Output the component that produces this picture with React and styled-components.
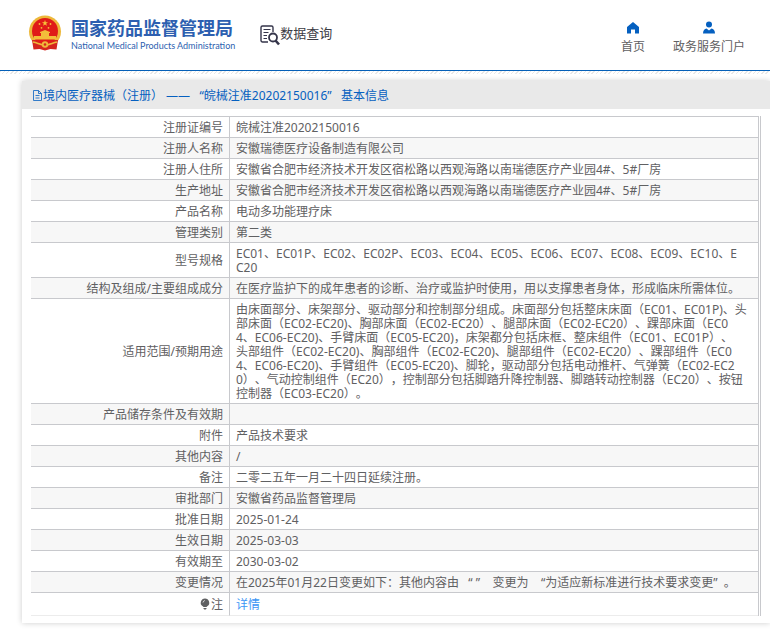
import React from "react";
import styled, { createGlobalStyle } from "styled-components";

const GlobalStyle = createGlobalStyle`
  * {
    box-sizing: border-box;
  }

  body {
    margin: 0;
    background: #fff;
    color: #5f6062;
    font-family: "Noto Sans", "Noto Sans CJK SC", sans-serif;
    font-size: 12px;
    line-height: 14px;
    text-spacing-trim: space-all;
  }
`;

const Header = styled.header`
  display: flex;
  justify-content: space-between;
  height: 71px;
  padding: 0 25px 0 28px;
  border-bottom: 1px solid #0560b8;
`;

const Hatch = styled.div`
  height: 3px;
  background: repeating-linear-gradient(135deg, #e8e8e8 0 1px, #fff 1px 3px);
`;

const Brand = styled.a`
  display: flex;
  gap: 9px;
  padding-top: 15px;
  color: #2d5fb0;
  text-decoration: none;
`;

const BrandName = styled.div`
  padding-top: 4px;
  font-family: "Liberation Sans", "Noto Sans CJK SC", sans-serif;
  font-size: 18px;
  font-weight: 700;
  line-height: 21px;
  white-space: nowrap;
`;

const BrandSub = styled.div`
  font-family: Lato, sans-serif;
  font-size: 9px;
  font-weight: 400;
  line-height: 12px;
  white-space: nowrap;
`;

const Left = styled.div`
  display: flex;
  gap: 25px;
`;

const Query = styled.div`
  display: flex;
  align-items: flex-start;
  padding-top: 25px;
  color: #3c3c44;
  font-size: 13px;
  line-height: 16px;
  white-space: nowrap;
`;

const Nav = styled.nav`
  display: flex;
  gap: 28px;
  padding-top: 21px;
`;

const NavLink = styled.a`
  display: flex;
  flex-direction: column;
  align-items: center;
  gap: 6px;
  color: #5f6062;
  text-decoration: none;
  white-space: nowrap;
`;

const Panel = styled.main`
  margin: 7px 0 6px 22px;
  background: #fff;
  box-shadow: 0 0 6px rgba(0, 0, 0, 0.2);
`;

const PanelTitle = styled.h1`
  display: flex;
  align-items: center;
  height: 28px;
  margin: 0;
  padding: 2px 10px 0;
  background: #e9e9e9;
  color: #0560c0;
  font-size: 12px;
  font-weight: 400;
  line-height: 14px;
  white-space: pre;
`;

const PanelBody = styled.div`
  padding: 7px 9px;
`;

const TableFrame = styled.div`
  padding-right: 1px;
  border-right: 1px solid #c8c9cd;
`;

const Table = styled.table`
  width: 100%;
  border-collapse: separate;
  border-spacing: 0;
  border-top: 1px solid #c8c9cd;
  border-right: 1px solid #c8c9cd;
`;

const Row = styled.tr`
  background: #fff;

  &:nth-child(even) {
    background: #f7f7f7;
  }

  &:last-child > * {
    height: 23px;
    border-bottom-color: #ececec;
  }
`;

const Label = styled.th`
  width: 199px;
  padding: 4px 6px 2px 0;
  border-right: 1px solid #c8c9cd;
  border-bottom: 1px solid #c8c9cd;
  font-weight: 400;
  text-align: right;
  white-space: nowrap;
`;

const Value = styled.td`
  height: 21px;
  padding: 4px 6px 2px;
  border-bottom: 1px solid #c8c9cd;
  white-space: pre-line;
  word-break: break-all;
`;

const DetailLink = styled.a`
  color: #3c96f5;
  text-decoration: none;
`;

const BulbIcon = styled.svg`
  margin-right: 1px;
  vertical-align: -1px;
`;

const rows = [
  ["注册证编号", "皖械注准20202150016"],
  ["注册人名称", "安徽瑞德医疗设备制造有限公司"],
  ["注册人住所", "安徽省合肥市经济技术开发区宿松路以西观海路以南瑞德医疗产业园4#、5#厂房"],
  ["生产地址", "安徽省合肥市经济技术开发区宿松路以西观海路以南瑞德医疗产业园4#、5#厂房"],
  ["产品名称", "电动多功能理疗床"],
  ["管理类别", "第二类"],
  [
    "型号规格",
    "EC01、EC01P、EC02、EC02P、EC03、EC04、EC05、EC06、EC07、EC08、EC09、EC10、E\nC20",
  ],
  [
    "结构及组成/主要组成成分",
    "在医疗监护下的成年患者的诊断、治疗或监护时使用，用以支撑患者身体，形成临床所需体位。",
  ],
  [
    "适用范围/预期用途",
    "由床面部分、床架部分、驱动部分和控制部分组成。床面部分包括整床床面（EC01、EC01P)、头\n" +
      "部床面（EC02-EC20)、胸部床面（EC02-EC20）、腿部床面（EC02-EC20）、踝部床面（EC0\n" +
      "4、EC06-EC20)、手臂床面（EC05-EC20)，床架都分包括床框、整床组件（EC01、EC01P）、\n" +
      "头部组件（EC02-EC20)、胸部组件（EC02-EC20)、腿部组件（EC02-EC20）、踝部组件（EC0\n" +
      "4、EC06-EC20)、手臂组件（EC05-EC20)、脚轮，驱动部分包括电动推杆、气弹簧（EC02-EC2\n" +
      "0）、气动控制组件（EC20），控制部分包括脚踏升降控制器、脚踏转动控制器（EC20）、按钮\n" +
      "控制器（EC03-EC20）。",
  ],
  ["产品储存条件及有效期", ""],
  ["附件", "产品技术要求"],
  ["其他内容", "/"],
  ["备注", "二零二五年一月二十四日延续注册。"],
  ["审批部门", "安徽省药品监督管理局"],
  ["批准日期", "2025-01-24"],
  ["生效日期", "2025-03-03"],
  ["有效期至", "2030-03-02"],
  [
    "变更情况",
    "在2025年01月22日变更如下：其他内容由\u00a0\u00a0\u00a0“\u00a0”\u00a0\u00a0\u00a0\u00a0变更为\u00a0\u00a0\u00a0\u00a0“为适应新标准进行技术要求变更”\u00a0\u00a0。",
  ],
];

function Emblem() {
  return (
    <svg width="34" height="36" viewBox="0 0 34 36" aria-hidden="true">
      <circle cx="17" cy="16.500" r="16" fill="#edb83a" />
      <path d="M4 25h26l-1.500 9.500-6-.5-5.500 1.500-5.500-1.500-6 .5z" fill="#d5261f" />
      <circle cx="17" cy="16" r="13" fill="#e01b18" />
      <path d="M17 5l.8 2.200h2.300l-1.900 1.400.7 2.200-1.900-1.300-1.900 1.300.7-2.200-1.900-1.400h2.300z" fill="#f7c23a" />
      <g fill="#f3bd3a">
        <circle cx="11.500" cy="9" r=".9" />
        <circle cx="22.500" cy="9" r=".9" />
        <circle cx="13.500" cy="12.800" r=".9" />
        <circle cx="20.500" cy="12.800" r=".9" />
        <path d="M12 17l5-2 5 2v1h-1v3h7v3.500H6V21h7v-3h-1z" />
      </g>
      <path d="M5 27c5 1 7 3 12 3s7-2 12-3" fill="none" stroke="#efb83a" strokeWidth="1.500" />
      <circle cx="17" cy="29.500" r="3.200" fill="#efb83a" />
      <circle cx="17" cy="29.500" r="1.300" fill="#d5261f" />
    </svg>
  );
}

function QueryIcon() {
  return (
    <svg width="20" height="21" viewBox="0 0 20 21" fill="none" stroke="#35354a" aria-hidden="true">
      <path d="M8 17H2.500a1.500 1.500 0 0 1-1.500-1.500v-13A1.500 1.500 0 0 1 2.500 1h9A1.500 1.500 0 0 1 13 2.500V7" strokeWidth="1.400" />
      <path d="M3.500 4.500h7M3.500 7.500h5M3.500 10.500h3.500M3.500 13.500h3.500" />
      <circle cx="13" cy="12.500" r="4" strokeWidth="1.800" />
      <path d="M15.500 15.500l3.500 4" strokeWidth="2.600" />
    </svg>
  );
}

function App() {
  return (
    <>
      <GlobalStyle />
      <Header>
        <Left>
          <Brand href="#">
            <Emblem />
            <div>
              <BrandName>国家药品监督管理局</BrandName>
              <BrandSub>National Medical Products Administration</BrandSub>
            </div>
          </Brand>
          <Query>
            <QueryIcon />
            数据查询
          </Query>
        </Left>
        <Nav>
          <NavLink href="#">
            <svg width="12" height="13" viewBox="0 0 12 13" fill="#0560c0" aria-hidden="true">
              <path d="M6 1L0 6v6.500h4V8.500h4v4h4V6z" />
            </svg>
            首页
          </NavLink>
          <NavLink href="#">
            <svg width="12" height="13" viewBox="0 0 12 13" fill="#0560c0" aria-hidden="true">
              <circle cx="6" cy="3.500" r="3" />
              <path d="M0 12.500c0-3 1.500-4.500 3.500-5L6 9.500l2.500-2c2 .5 3.500 2 3.500 5z" />
            </svg>
            政务服务门户
          </NavLink>
        </Nav>
      </Header>
      <Hatch />
      <Panel>
        <PanelTitle>
          <svg width="11" height="12" viewBox="0 0 11 12" fill="none" stroke="#0560c0" strokeWidth=".8" aria-hidden="true">
            <path d="M1.500.5h5l3 3v7h-8zM6.500.5v3h3M3.500 5.500h4M3.500 8h4" />
          </svg>
          {"境内医疗器械（注册） ——   “皖械注准20202150016”   基本信息"}
        </PanelTitle>
        <PanelBody>
          <TableFrame>
            <Table>
              <tbody>
                {rows.map(([label, value]) => (
                  <Row key={label}>
                    <Label scope="row">{label}</Label>
                    <Value>{value}</Value>
                  </Row>
                ))}
                <Row>
                  <Label scope="row">
                    <BulbIcon width="10" height="12" viewBox="0 0 10 12" fill="#5f6062" aria-hidden="true">
                      <path d="M5 .5a4.200 4.200 0 0 0-2.500 7.600L3.500 9h3l1-.9A4.200 4.200 0 0 0 5 .5zM3.500 10h3v.8l-.8.8H4.300l-.8-.8z" />
                      <path d="M3 4.500Q3.200 3 4.800 2.500" stroke="#fff" fill="none" strokeWidth=".8" />
                    </BulbIcon>
                    注
                  </Label>
                  <Value>
                    <DetailLink href="#">详情</DetailLink>
                  </Value>
                </Row>
              </tbody>
            </Table>
          </TableFrame>
        </PanelBody>
      </Panel>
    </>
  );
}

export default App;
